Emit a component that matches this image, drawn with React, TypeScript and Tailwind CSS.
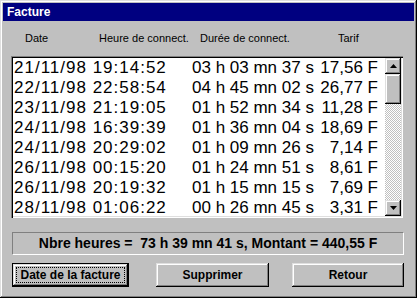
const rows = [
  ["21/11/98 19:14:52", "03 h 03 mn 37 s", "17,56 F"],
  ["22/11/98 22:58:54", "04 h 45 mn 02 s", "26,77 F"],
  ["23/11/98 21:19:05", "01 h 52 mn 34 s", "11,28 F"],
  ["24/11/98 16:39:39", "01 h 36 mn 04 s", "18,69 F"],
  ["24/11/98 20:29:02", "01 h 09 mn 26 s", "7,14 F"],
  ["26/11/98 00:15:20", "01 h 24 mn 51 s", "8,61 F"],
  ["26/11/98 20:19:32", "01 h 15 mn 15 s", "7,69 F"],
  ["28/11/98 01:06:22", "00 h 26 mn 45 s", "3,31 F"],
];

const raised =
  "shadow-[inset_-1px_-1px_#000,inset_1px_1px_#dfdfdf,inset_-2px_-2px_#808080,inset_2px_2px_#fff]";

function Arrow({ up }: { up?: boolean }) {
  return (
    <div className={`h-[16px] w-[16px] bg-[#c0c0c0] flex items-center justify-center ${raised}`}>
      <svg width="7" height="4" viewBox="0 0 7 4">
        <path d={up ? "M3.5 0 L7 4 L0 4 Z" : "M0 0 L7 0 L3.5 4 Z"} fill="#000" />
      </svg>
    </div>
  );
}

function Button({ label, focused }: { label: string; focused?: boolean }) {
  return (
    <div
      className={`h-[24px] bg-[#c0c0c0] flex items-center justify-center text-[12px] font-bold ${
        focused ? "border border-black" : ""
      } ${raised}`}
    >
      <span className={focused ? "px-[3px] leading-[14px] outline-1 outline-dotted outline-black" : ""}>{label}</span>
    </div>
  );
}

export default function App() {
  return (
    <div
      className={`w-[417px] h-[298px] bg-[#c0c0c0] p-[3px] flex flex-col font-['Liberation_Sans',Arial,sans-serif] text-black shadow-[inset_-1px_-1px_#000,inset_1px_1px_#dfdfdf,inset_-2px_-2px_#808080,inset_2px_2px_#fff]`}
    >
      {/* barre de titre */}
      <div className="h-[18px] bg-[#000080] text-white text-[12px] font-bold leading-[18px] pl-[4px]">Facture</div>

      {/* en-têtes */}
      <div className="h-[35px] flex items-center pl-[22px] text-[11px]">
        <span className="w-[74px]">Date</span>
        <span className="w-[101px]">Heure de connect.</span>
        <span className="w-[138px]">Durée de connect.</span>
        <span>Tarif</span>
      </div>

      {/* liste */}
      <div className="ml-[8px] w-[392px] h-[162px] flex shadow-[inset_1px_1px_#808080,inset_2px_2px_#000,inset_-1px_-1px_#fff,inset_-2px_-2px_#dfdfdf] p-[2px]">
        <div className="flex-1 bg-white overflow-hidden text-[17px]">
          {rows.map((r) => (
            <div key={r[0]} className="h-[20px] leading-[20px] flex pl-[1px] pr-[7px]">
              <span className="w-[178px] whitespace-pre tracking-[1px]">{r[0]}</span>
              <span className="flex-1 whitespace-pre">{r[1]}</span>
              <span className="text-right whitespace-pre">{r[2]}</span>
            </div>
          ))}
        </div>
        <div className="w-[16px] flex flex-col bg-[repeating-conic-gradient(#c0c0c0_0%_25%,#fff_0%_50%)] bg-[length:2px_2px]">
          <Arrow up />
          <div className={`h-[30px] bg-[#c0c0c0] ${raised}`} />
          <div className="flex-1" />
          <Arrow />
        </div>
      </div>

      {/* total */}
      <div className="mt-[14px] ml-[9px] w-[392px] h-[23px] border border-t-[#808080] border-l-[#808080] border-b-white border-r-white flex items-center justify-center text-[14px] font-bold whitespace-pre">
        Nbre heures =  73 h 39 mn 41 s, Montant = 440,55 F
      </div>

      {/* boutons */}
      <div className="mt-[8px] ml-[9px] flex">
        <div className="w-[117px]">
          <Button label="Date de la facture" focused />
        </div>
        <div className="w-[113px] ml-[27px]">
          <Button label="Supprimer" />
        </div>
        <div className="w-[112px] ml-[23px]">
          <Button label="Retour" />
        </div>
      </div>
    </div>
  );
}
